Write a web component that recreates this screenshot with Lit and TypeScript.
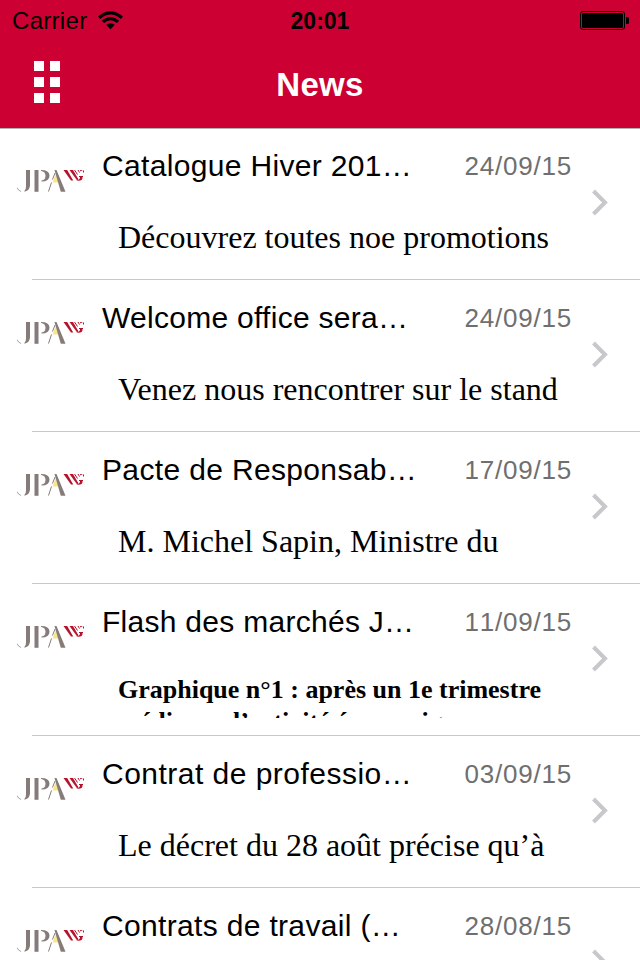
import { LitElement, html, css, svg } from "lit";
import { customElement, property } from "lit/decorators.js";

interface NewsItem {
  title: string;
  date: string;
  excerpt: string;
  tracking: number;
  small?: boolean;
}

const NEWS: NewsItem[] = [
  { title: "Catalogue Hiver 201…", date: "24/09/15", tracking: 0.33, excerpt: "Découvrez toutes noe promotions" },
  { title: "Welcome office sera…", date: "24/09/15", tracking: 0.28, excerpt: "Venez nous rencontrer sur le stand" },
  { title: "Pacte de Responsab…", date: "17/09/15", tracking: 0.35, excerpt: "M. Michel Sapin, Ministre du" },
  { title: "Flash des marchés J…", date: "11/09/15", tracking: 0.28, excerpt: "Graphique n°1 : après un 1e trimestre médiocre, l’activité économique", small: true },
  { title: "Contrat de professio…", date: "03/09/15", tracking: 0.48, excerpt: "Le décret du 28 août précise qu’à" },
  { title: "Contrats de travail (…", date: "28/08/15", tracking: 0.33, excerpt: "" },
];

@customElement("status-bar")
class StatusBar extends LitElement {
  static styles = css`
    :host { display: grid; grid-template-columns: 1fr auto 1fr; height: 40px; align-items: start; color: #000; font: 24px/40px "Liberation Sans", sans-serif; }
    .left { display: flex; align-items: flex-start; padding-left: 12px; gap: 11px; }
    .carrier { letter-spacing: 0.3px; padding-top: 1px; }
    .time { font-weight: 700; font-size: 23px; padding-top: 1px; }
    .right { display: flex; justify-content: flex-end; padding-right: 11px; }
    svg { display: block; margin-top: 10px; }
  `;
  render() {
    return html`
      <div class="left">
        <span class="carrier">Carrier</span>
        <svg width="26" height="20" viewBox="0 0 26 20" fill="none" stroke="#000" stroke-width="3.2">
          <path d="M1.100 7.700Q12.500-2.100 23.900 7.700" />
          <path d="M5 11.900Q12.500 5.300 20 11.900" />
          <path d="M8.300 14.700Q12.500 11.700 16.700 14.700L12.500 19.300Z" fill="#000" stroke="none" />
        </svg>
      </div>
      <span class="time">20:01</span>
      <div class="right">
        <svg width="49" height="20" viewBox="0 0 49 20">
          <rect x="0.5" y="1.5" width="44" height="18" rx="2.500" fill="none" stroke="#000" />
          <rect x="2" y="3" width="41" height="15" rx="1.500" />
          <path d="M46 7h1.500q1.500 0 1.500 1.500v4q0 1.500-1.500 1.500H46z" />
        </svg>
      </div>
    `;
  }
}

@customElement("nav-bar")
class NavBar extends LitElement {
  static styles = css`
    :host { display: grid; grid-template-columns: 1fr auto 1fr; height: 88px; align-items: center; }
    .grid { display: grid; grid-template-columns: 10px 10px; grid-auto-rows: 10px; gap: 6px; margin: -4px 0 0 34px; }
    .cell { background: #fff; }
    .title { color: #fff; font: 700 33px/40px "Liberation Sans", sans-serif; letter-spacing: 0.3px; padding-top: 2px; }
  `;
  render() {
    return html`
      <div class="grid">${Array.from({ length: 6 }, () => html`<i class="cell"></i>`)}</div>
      <span class="title">News</span>
    `;
  }
}

const logo = svg`
  <path d="M39 4l4.500 8.500h-8z" fill="#fbe58a"/>
  <g fill="#857b79">
    <path d="M9 0h4v15q0 5.500-5.500 6.700v-1q1.500-1 1.500-4z"/>
    <path d="M17.500 0h4v21.800h-4z"/>
    <path d="M24 0q8.500 0 8.500 5.700t-8 5.800v-.9q4-.6 4-4.900T24 .9z"/>
    <path d="M37.500 0h2L48.500 21.800h-4.700z"/>
  </g>
  <path d="M0 17.500l1.500 2.500L4 21.500" fill="none" stroke="#aaa3a1"/>
  <path d="M38 3L35.500 9.500M34.500 12.500L31.500 21.500" fill="none" stroke="#857b79"/>
  <g fill="#b5122b">
    <path d="M46.500 0h3.700l6 10.500h-2.200z"/>
    <path d="M52.500 0h3.500l5.500 9.500-1.300 1z"/>
    <path d="M59 10.500q4-.3 4-3.500h2.500v1q0 2.500-4 2.800z"/>
  </g>
  <path d="M57.500 0l3 4.500M61 0l1.500 2.500M65.500 0l-2.500.8M66.500.5v2M62 6.500h4" fill="none" stroke="#b5122b"/>
`;

@customElement("news-row")
class NewsRow extends LitElement {
  @property({ attribute: false }) item!: NewsItem;
  static styles = css`
    :host { display: grid; grid-template-columns: 102px 1fr 80px; height: 152px; flex: none; box-sizing: border-box; background: linear-gradient(#c8c7cc, #c8c7cc) 32px 151px / 100% 1px no-repeat; }
    .logo { margin: 42px 0 0 17px; display: block; }
    .main { min-width: 0; }
    .head { display: flex; justify-content: space-between; align-items: flex-start; height: 72px; margin-right: -12px; padding-top: 20px; box-sizing: border-box; }
    .title { font: 30px/36px "Liberation Sans", sans-serif; color: #000; white-space: nowrap; }
    .date { font: 26px/36px "Liberation Sans", sans-serif; color: #6f6f6f; letter-spacing: 0.8px; font-kerning: none; }
    .excerpt { margin: 17px 0 0 16px; height: 40px; font: 32px/40px "Liberation Serif", serif; white-space: nowrap; }
    .small { font-size: 26px; line-height: 32px; font-weight: 700; white-space: normal; overflow: hidden; height: 44px; margin-top: 18px; }
    .chevron { margin: 61px 0 0 30px; display: block; }
  `;
  render() {
    return html`
      <svg class="logo" width="70" height="24" viewBox="0 0 70 24">${logo}</svg>
      <div class="main">
        <div class="head">
          <span class="title" style="letter-spacing:${this.item.tracking}px">${this.item.title}</span>
          <span class="date">${this.item.date}</span>
        </div>
        <div class="excerpt ${this.item.small ? "small" : ""}">${this.item.excerpt}</div>
      </div>
      <svg class="chevron" width="20" height="28" viewBox="0 0 20 28" fill="none" stroke="#c7c7cc" stroke-width="4"><path d="M3.500 2L15 13.500L3.500 25"/></svg>
    `;
  }
}

@customElement("app-root")
class AppRoot extends LitElement {
  static styles = css`
    :host { display: flex; flex-direction: column; height: 960px; overflow: hidden; background: #fff; }
    .header { background: #cc0033; flex: none; }
    .list { display: flex; flex-direction: column; box-shadow: inset 0 1px #b2b2b2; }
  `;
  render() {
    return html`
      <div class="header"><status-bar></status-bar><nav-bar></nav-bar></div>
      <div class="list">${NEWS.map((n) => html`<news-row .item=${n}></news-row>`)}</div>
    `;
  }
}
